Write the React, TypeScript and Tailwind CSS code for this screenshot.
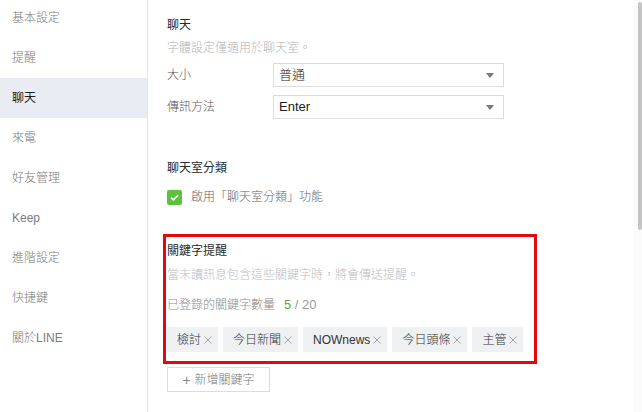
const menu = ['基本設定', '提醒', '聊天', '來電', '好友管理', 'Keep', '進階設定', '快捷鍵', '關於LINE']
const keywords = ['檢討', '今日新聞', 'NOWnews', '今日頭條', '主管']

function Select({ value }: { value: string }) {
  return (
    <div className="flex items-center justify-between w-[231px] h-[24px] border border-[#dcdcdc] bg-white pl-[5px] pr-[9px] text-[13px] text-[#222]">
      <span>{value}</span>
      <svg width="8" height="5" viewBox="0 0 8 5">
        <path d="M0 0h8L4 5z" fill="#7a7a7a" />
      </svg>
    </div>
  )
}

export default function App() {
  return (
    <div
      className="flex h-[412px] w-[642px] bg-white overflow-hidden text-[12px] leading-[18px] font-light"
      style={{ fontFamily: '"Liberation Sans", "Noto Sans CJK TC", sans-serif' }}
    >
      <div className="w-[148px] shrink-0 border-r border-[#e6e6e6]">
        <div className="-mt-[2px]">
          {menu.map((m) => (
            <div
              key={m}
              className={
                m === '聊天'
                  ? 'h-10 flex items-center pl-[12px] bg-[#e9ecf2] text-[#1e1e1e] font-normal'
                  : 'h-10 flex items-center pl-[12px] text-[#7b7b7b]'
              }
            >
              {m}
            </div>
          ))}
        </div>
      </div>

      <div className="flex-1 pl-[19px] pt-[16px]">
        <div className="text-[#2a2a2a] font-normal">聊天</div>
        <div className="mt-[5px] text-[#b4b4b4]">字體設定僅適用於聊天室。</div>
        <div className="mt-[6px] flex items-center">
          <div className="w-[106px] text-[#555]">大小</div>
          <Select value="普通" />
        </div>
        <div className="mt-[8px] flex items-center">
          <div className="w-[106px] text-[#555]">傳訊方法</div>
          <Select value="Enter" />
        </div>

        <div className="mt-[40px] text-[#2a2a2a] font-normal">聊天室分類</div>
        <div className="mt-[11px] flex items-center">
          <div className="w-[15px] h-[15px] rounded-[2px] bg-[#5dc13b] flex items-center justify-center">
            <svg width="9" height="7" viewBox="0 0 9 7">
              <path d="M1 3.6l2.3 2.2L8 1.2" stroke="white" strokeWidth="1.6" fill="none" />
            </svg>
          </div>
          <span className="ml-[9px] text-[#666]">啟用「聊天室分類」功能</span>
        </div>

        <div className="mt-[31px] -ml-[1px] w-[368px] pl-[1px] pt-[5px] pb-[9px] outline-[3px] outline-solid outline-[#e3080f]">
          <div className="text-[#2a2a2a] font-normal">關鍵字提醒</div>
          <div className="mt-[6px] text-[#bdbdbd]">當未讀訊息包含這些關鍵字時，將會傳送提醒。</div>
          <div className="mt-[12px] text-[#8a8a8a]">
            已登錄的關鍵字數量
            <span className="ml-[9px] text-[13px] text-[#5aa83a]">5</span>
            <span className="text-[13px] text-[#999]"> / 20</span>
          </div>
          <div className="mt-[13px] flex gap-[5px]">
            {keywords.map((k) => (
              <div
                key={k}
                className="h-[25px] flex items-center pl-[10px] pr-[6px] bg-[#eef0f2] text-[12px] text-[#333]"
              >
                {k}
                <svg className="ml-[3px]" width="8" height="8" viewBox="0 0 8 8">
                  <path d="M0.5 0.5l7 7M7.5 0.5l-7 7" stroke="#9a9a9a" strokeWidth="0.9" />
                </svg>
              </div>
            ))}
          </div>
        </div>

        <button className="mt-[6px] h-[25px] w-[103px] border border-[#dcdcdc] bg-white text-[12px] text-[#777] flex items-center justify-center">
          <span className="mr-[4px] text-[14px] text-[#888]">+</span>新增關鍵字
        </button>
      </div>

      <div className="w-[9px] shrink-0 flex justify-end bg-[#fbfbfb]">
        <div className="mt-[2px] h-[228px] w-[4px] rounded-[2px] bg-[#c4c4c4]" />
      </div>
    </div>
  )
}
